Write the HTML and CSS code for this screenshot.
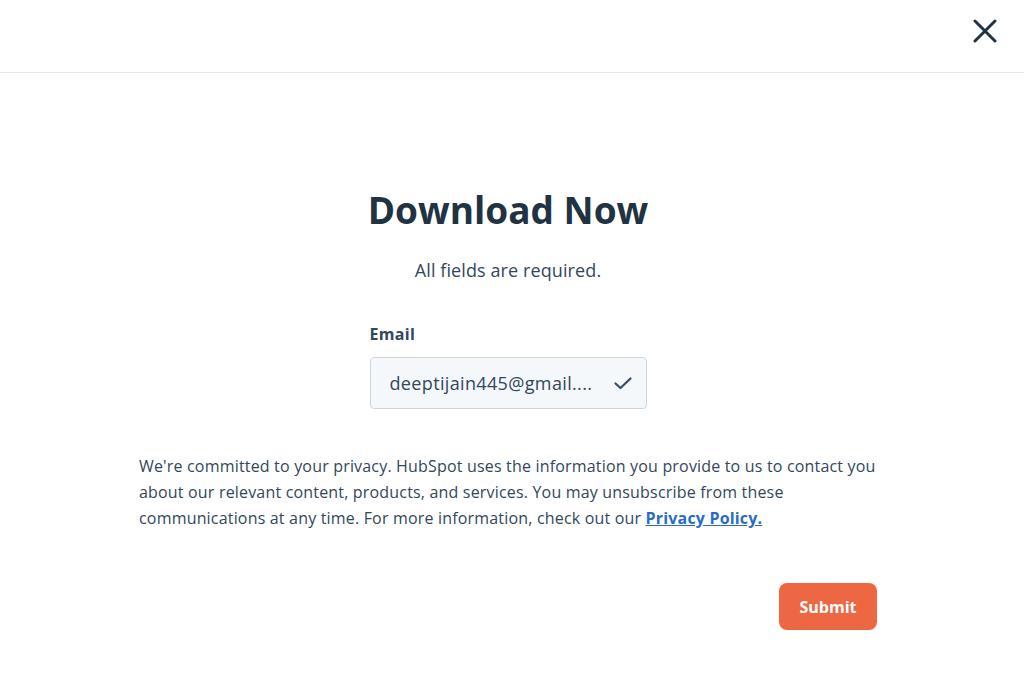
FILE: index.html
```html
<!DOCTYPE html>
<html lang="en">
<head>
<meta charset="UTF-8">
<meta name="viewport" content="width=device-width, initial-scale=1.0">
<title>Download Now</title>
<link rel="stylesheet" href="styles.css">
</head>
<body>
    <div class="top_bar">
        <button class="close_btn" aria-label="Close">
            <svg width="24" height="24" viewBox="0 0 24 24">
                <path d="M2 2 L22 22 M22 2 L2 22" stroke="#213343" stroke-width="3" stroke-linecap="round" fill="none"/>
            </svg>
        </button>
    </div>

    <div class="form_wrap">
        <h1 class="form_title">Download Now</h1>
        <p class="form_note">All fields are required.</p>

        <div class="field">
            <label for="email" class="field_label">Email</label>
            <div class="input_box">
                <span class="input_value">deeptijain445@gmail....</span>
                <svg class="check_icon" width="22" height="22" viewBox="0 0 22 22">
                    <path d="M3.5 11.5 L8.5 16 L18.5 6.5" stroke="#3e4f60" stroke-width="2.3" stroke-linecap="round" stroke-linejoin="round" fill="none"/>
                </svg>
            </div>
        </div>

        <p class="privacy_text">We're committed to your privacy. HubSpot uses the information you provide to us to contact you about our relevant content, products, and services. You may unsubscribe from these communications at any time. For more information, check out our <a href="#" class="privacy_link">Privacy Policy.</a></p>

        <div class="submit_row">
            <button class="submit_btn">Submit</button>
        </div>
    </div>
</body>
</html>
```

FILE: styles.css
```css
body{
    margin: 0px;
    font-family: "Open Sans", "DejaVu Sans", sans-serif;
    color: #33475b;
    background: #fff;
}
.top_bar{
    height: 72px;
    border-bottom: 1px solid #e5e8ed;
    display: flex;
    justify-content: flex-end;
    align-items: center;
    padding-right: 27px;
}
.close_btn{
    background: none;
    border: none;
    padding: 0;
    width: 24px;
    height: 24px;
    cursor: pointer;
    margin-top: -10px;
}
.form_wrap{
    width: 738px;
    margin-left: 139px;
    padding-top: 112px;
}
.form_title{
    margin: 0;
    text-align: center;
    font-size: 37px;
    font-weight: 700;
    color: #213343;
    line-height: 50px;
}
.form_note{
    margin: 23px 0 0 0;
    text-align: center;
    font-size: 18px;
    line-height: 24px;
    letter-spacing: 0.1px;
}
.field{
    width: 277px;
    margin: 42px auto 0 auto;
}
.field_label{
    display: block;
    font-size: 16px;
    font-weight: 700;
    color: #33475b;
    line-height: 20px;
    margin-bottom: 13px;
    letter-spacing: 0.3px;
}
.input_box{
    height: 50px;
    border: 1px solid #cbd6e2;
    border-radius: 4px;
    background: #f5f8fa;
    display: flex;
    align-items: center;
    justify-content: space-between;
    padding: 0 12px 0 19px;
}
.input_value{
    font-size: 18px;
    color: #33475b;
    letter-spacing: 0.35px;
}
.privacy_text{
    margin: 44px 0 0 0;
    font-size: 16px;
    line-height: 26px;
    color: #33475b;
    letter-spacing: 0.18px;
}
.privacy_link{
    color: #2a6cc4;
    font-weight: 700;
}
.submit_row{
    display: flex;
    justify-content: flex-end;
    margin-top: 52px;
}
.submit_btn{
    background: #ed6842;
    color: #fff;
    border: none;
    border-radius: 8px;
    width: 98px;
    height: 47px;
    font-family: inherit;
    font-size: 16px;
    font-weight: 700;
    cursor: pointer;
}
```
